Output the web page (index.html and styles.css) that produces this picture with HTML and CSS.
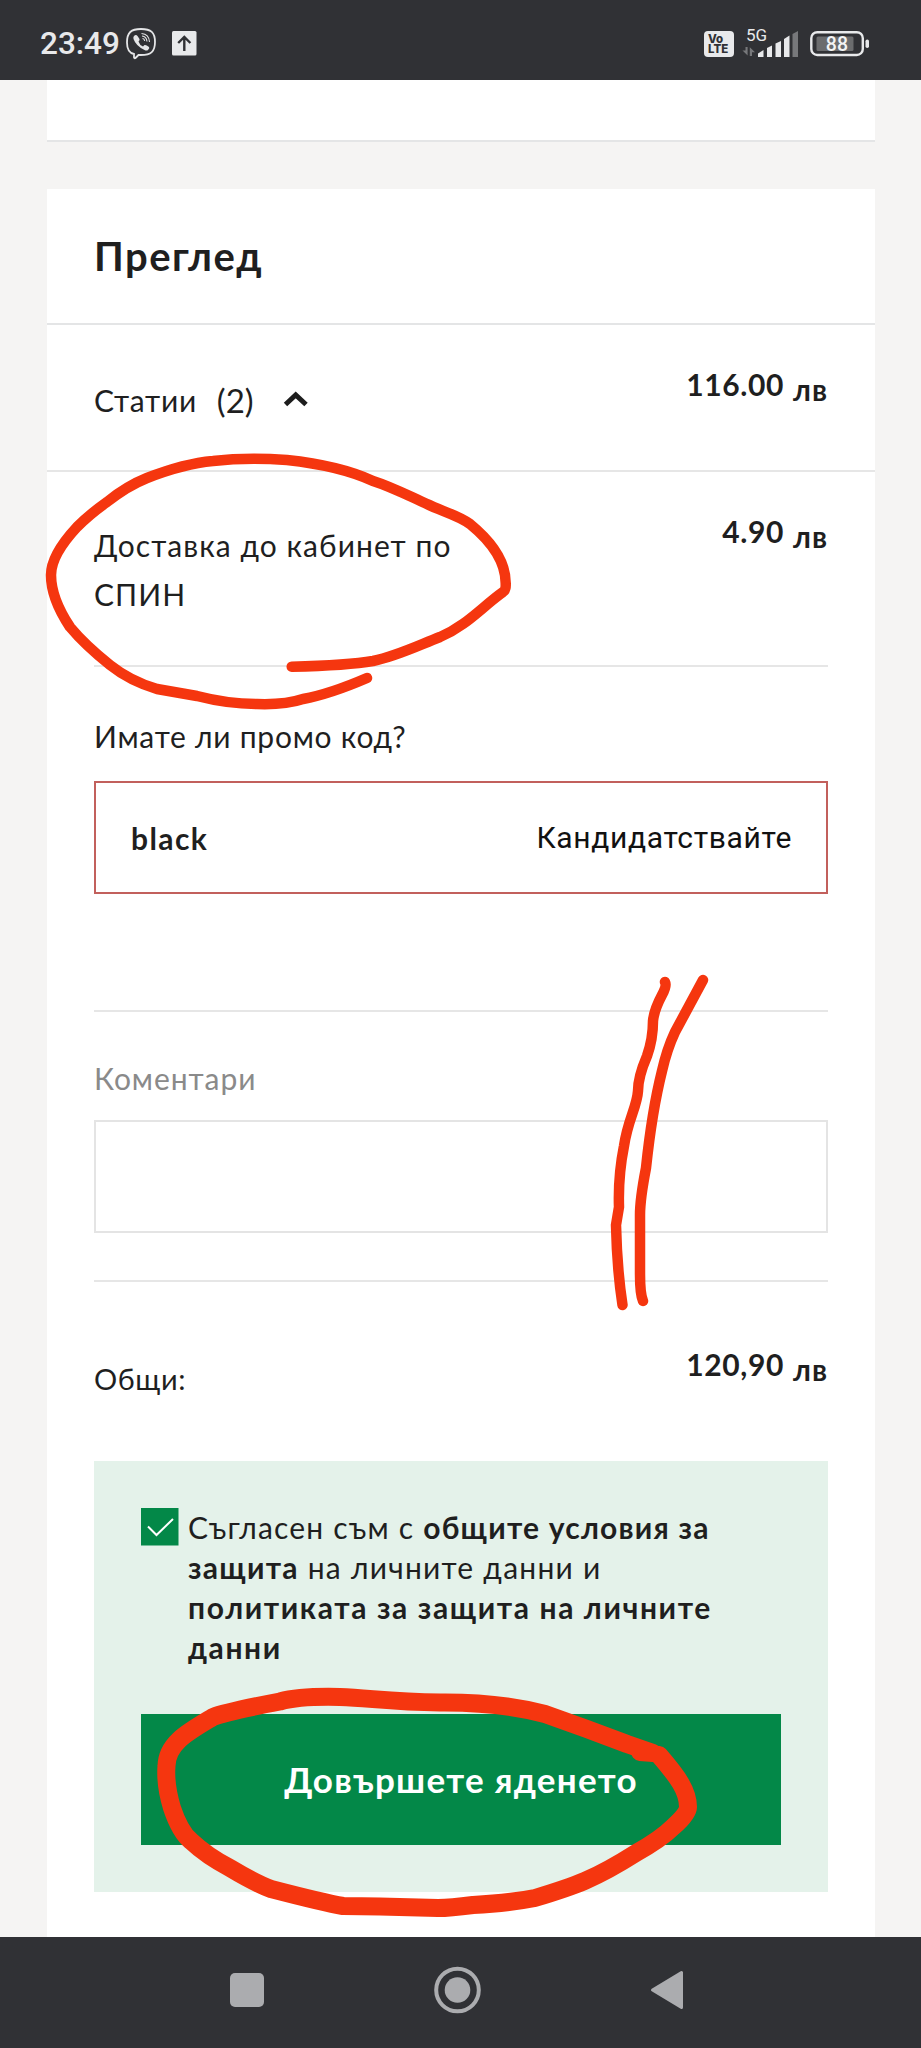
FILE: index.html
```html
<!DOCTYPE html>
<html lang="bg">
<head>
<meta charset="utf-8">
<title>Преглед</title>
<link rel="stylesheet" href="styles.css">
</head>
<body>
<div class="screen">
  <header class="status">
    <span class="clock">23:49</span>
    <svg class="viber" width="30" height="32" viewBox="0 0 30 32" fill="none" stroke="#e4e5e7">
      <path stroke-width="1.8" d="M15 1C5 1 1 4.500 1 14.500C1 21 3 25 8 26V29.500Q8.500 31 10 29.500L12.500 27H15C25 27 29 23.500 29 14C29 4.500 25 1 15 1Z"/>
      <path fill="#e4e5e7" stroke="none" d="M8 8Q10 6 11.500 8L13.500 11Q14 12 12.500 13.500Q13.500 17 17 18.500L18.500 17Q20 16.500 23 19Q24 20 22 22Q20.500 23 18.500 22Q10 18 7.500 11Q7 9 8 8Z"/>
      <path stroke-width="1.100" d="M15.500 5.500Q23 6 23.500 14M16 8Q20.500 8.500 21 13.500M16.500 10.500Q18.500 10.700 18.700 13"/>
    </svg>
    <svg class="upload" width="25" height="25" viewBox="0 0 25 25">
      <rect width="24.500" height="24.500" rx="1.500" fill="#e8e9eb"/>
      <path d="M12.300 20V6.500M6.200 12L12.300 6L18.400 12" fill="none" stroke="#303135" stroke-width="2.400"/>
    </svg>
    <span class="spacer"></span>
    <span class="volte"><span>Vo</span><span>LTE</span></span>
    <svg class="signal" width="58" height="32" viewBox="0 -2 58 32">
      <text class="net" x="4" y="13">5G</text>
      <path d="M5.600 19V27.500L0.500 22.500H3.500V19ZM7.800 28V19.300L13 24.300H10V28Z" fill="#77787b"/>
      <g fill="#e8e9eb">
        <path d="M16 29V25.500L21.500 22V29Z"/><path d="M25 29V20L30 17.500V29Z"/><path d="M33.500 29V15.500L39 13V29Z"/><path d="M42 29V11L47.500 7.500V29Z"/>
      </g>
      <path d="M50.500 29V6L56 3V29Z" fill="#77787b"/>
    </svg>
    <svg class="battery" width="60" height="27" viewBox="0 0 60 27">
      <rect x="1.300" y="2.200" width="51.500" height="22.800" rx="6" fill="none" stroke="#e8e9eb" stroke-width="2.400"/>
      <rect x="6.500" y="6.500" width="37" height="14.500" rx="1.500" fill="#6b6c6e"/>
      <rect x="55.500" y="9.500" width="3.500" height="8.500" rx="1.700" fill="#e8e9eb"/>
      <text class="charge" x="15.800" y="20.500">88</text>
    </svg>
  </header>

  <main class="page">
    <section class="card card-prev"></section>
    <section class="card">
      <h1 class="title">Преглед</h1>
      <div class="row row-items">
        <div class="items"><span>Статии</span><span class="count">(2)</span>
          <svg class="chevron" width="26" height="18" viewBox="0 0 26 18"><path d="M2.500 13.500L12.700 4L23 13.500" fill="none" stroke="#1d1d1d" stroke-width="5"/></svg>
        </div>
        <div class="price"><span>116.00</span><span class="cur">лв</span></div>
      </div>
      <div class="inner">
        <div class="row row-ship">
          <div class="ship">Доставка до кабинет по<br>СПИН</div>
          <div class="price"><span>4.90</span><span class="cur">лв</span></div>
        </div>
        <div class="promo">
          <div class="label">Имате ли промо код?</div>
          <div class="field field-error"><span class="code">black</span><span class="apply">Кандидатствайте</span></div>
        </div>
        <div class="comments">
          <div class="label muted">Коментари</div>
          <div class="field"></div>
        </div>
        <div class="row row-total">
          <div class="total">Общи:</div>
          <div class="price"><span>120,90</span><span class="cur">лв</span></div>
        </div>
        <div class="consent">
          <div class="agree">
            <svg class="check" width="38" height="38" viewBox="0 0 38 38"><rect width="37.500" height="37.500" fill="#038848"/><path d="M7 18.500L15.500 27L32 11" fill="none" stroke="#fff" stroke-width="2"/></svg>
            <div class="terms">
              <div class="line">Съгласен съм с <b>общите условия за</b></div>
              <div class="line second"><b>защита</b> на личните данни и</div>
              <div class="line wide"><b>политиката за защита на личните</b></div>
              <div class="line wide"><b>данни</b></div>
            </div>
          </div>
          <div class="submit">Довършете яденето</div>
        </div>
      </div>
    </section>
  </main>

  <nav class="navbar">
    <svg width="921" height="111" viewBox="0 0 921 111" fill="#abacaf">
      <rect x="230" y="36" width="34" height="34" rx="5"/>
      <circle cx="457.500" cy="53" r="21.300" fill="none" stroke="#abacaf" stroke-width="4"/><circle cx="457.500" cy="53" r="12.800"/>
      <path d="M652.500 53L681.500 35.500V70.500Z" stroke="#abacaf" stroke-width="3" stroke-linejoin="round"/>
    </svg>
  </nav>

  <svg class="marks" width="921" height="2048" viewBox="0 0 921 2048" fill="none" stroke="#f5360f" stroke-linecap="round" stroke-linejoin="round">
    <path stroke-width="10.500" d="M291.700 666.700C320 666 350 665 373 661C397 656 417 646 440 637C466 626 482 607 503 592Q506 590 505.700 584C506 562 492 542 470 524C458 515 441 511 427 504C409 496 392 487 373 481C345 468 315 463 287 460Q247 457 213 461C190 463 165 471 147 478Q127 486 107 502Q90 514 77 527Q51 555 51 575C51 594 60 612 70 627Q85 645 110 665Q130 681 157 689L197 696Q228 704 257 704Q285 705 303 699Q330 694 367 678"/>
    <path stroke-width="10.500" d="M665 982Q667 986 662 995Q654 1010 653 1021Q653 1039 647 1056Q638 1077 638 1091C637 1107 628 1119 624 1146Q618 1176 619 1207L616 1225Q617 1269 622.500 1305"/>
    <path stroke-width="10.500" d="M703 980L675 1032Q667 1049 662 1071Q652 1111 646 1168Q640 1199 640 1215V1274Q640 1294 643 1301"/>
    <path stroke-width="18" d="M659 1755C678 1777 688 1791 688 1807Q688 1814 673 1827Q661 1839 636 1853C595 1879 575 1886 535 1898Q510 1903 473 1905Q450 1908 438 1908L380 1906.500L343 1906Q325 1903 271 1889Q255 1883 230 1868Q207 1856 191 1841Q180 1832 172 1808Q165 1785 166.500 1766C167 1743 188 1732 213 1717Q225 1712 280 1701.500Q300 1696 340 1697C370 1698 390 1702 440 1702.500Q500 1702 545 1714Q585 1728 627 1744L653 1753L640 1752"/>
  </svg>
</div>
</body>
</html>
```
FILE: styles.css
```css
* { box-sizing: border-box; }
body { margin: 0; font-family: Lato, "Noto Sans", sans-serif; color: #1f1f1f; }
.screen { position: relative; display: flex; flex-direction: column; width: 921px; height: 2048px; overflow: hidden; background: #f5f4f3; }
.status { display: flex; align-items: flex-start; height: 80px; padding-left: 40px; padding-right: 51px; background: #303135; color: #e8e9eb; font-family: Roboto, sans-serif; }
.clock { width: 86px; margin-top: 25px; font-size: 31.500px; line-height: 38px; font-weight: 500; }
.viber { margin-top: 28px; }
.upload { margin: 31px 0 0 16px; }
.spacer { flex: 1; }
.volte { display: flex; flex-direction: column; width: 30px; height: 26px; margin: 31px 8px 0 0; padding: 3px 0 0 4px; border-radius: 4px; background: #e8e9eb; color: #303135; font: 800 11.500px/10px Inter, sans-serif; }
.signal { margin-top: 26px; overflow: visible; }
.net { font: 400 17px Roboto, sans-serif; fill: #e8e9eb; }
.battery { margin: 30px 0 0 10px; }
.charge { font: 500 19.500px Roboto, sans-serif; fill: #f4f4f5; }
.page { flex: 1; height: 1857px; padding: 0 46px 0 47px; overflow: hidden; }
.card { background: #fff; height: 1748px; }
.card-prev { height: 62px; margin-bottom: 47px; border-bottom: 2px solid #e4e5e6; }
.title { height: 136px; margin: 0; padding: 43px 47px 0; border-bottom: 2px solid #e4e5e6; font-size: 40px; line-height: 48px; font-weight: 700; letter-spacing: 1.500px; }
.row { display: flex; justify-content: space-between; }
.row-items { height: 147px; padding: 0 47px; border-bottom: 2px solid #e6e6e6; }
.items { display: flex; align-items: flex-start; font-size: 30px; line-height: 40px; padding-top: 55px; letter-spacing: 0.700px; }
.count { margin-left: 20px; font-size: 33px; letter-spacing: 0; }
.chevron { margin: 11px 0 0 29px; }
.price { display: flex; align-items: flex-start; padding-top: 39px; font-size: 30px; line-height: 40px; font-weight: 700; letter-spacing: 0.600px; }
.cur { padding-top: 5px; margin-left: 9px; letter-spacing: 1px; }
.inner { padding: 0 47px; }
.row-ship { height: 195px; border-bottom: 2px solid #e6e6e6; }
.ship { padding-top: 49px; font-size: 30px; line-height: 49px; letter-spacing: 1.050px; }
.promo { height: 345px; border-bottom: 2px solid #e6e6e6; }
.label { font-size: 30px; line-height: 40px; padding-top: 49px; height: 114px; letter-spacing: 0.750px; }
.muted { color: #8a8a8a; padding-top: 46px; height: 108px; letter-spacing: 0.950px; }
.field { display: flex; justify-content: space-between; height: 113px; padding: 35px 34px 0 35px; border: 2px solid #e4e4e4; font-size: 30px; line-height: 40px; }
.field-error { border-color: #c2605c; }
.code { font-weight: 700; letter-spacing: 1.400px; }
.apply { font-family: Roboto, sans-serif; color: #111; font-size: 30px; letter-spacing: 0.650px; }
.comments { height: 270px; border-bottom: 2px solid #e6e6e6; }
.row-total { height: 179px; }
.total { padding-top: 77px; font-size: 29px; line-height: 40px; letter-spacing: 0.600px; }
.row-total .price { padding-top: 62px; }
.consent { height: 431px; padding: 47px; background: #e4f2ea; }
.agree { display: flex; height: 206px; }
.terms { margin-top: -1px; padding-left: 9px; font-size: 30px; line-height: 40px; letter-spacing: 1.200px; }
.line { white-space: pre; }
.second { letter-spacing: 1.250px; }
.wide { letter-spacing: 1.600px; }
.submit { height: 131px; padding-top: 41px; background: #038848; color: #fff; text-align: center; font-size: 35px; line-height: 48px; font-weight: 700; letter-spacing: 1.250px; }
.navbar { height: 111px; background: #303135; }
.marks { position: absolute; left: 0; top: 0; }
```
